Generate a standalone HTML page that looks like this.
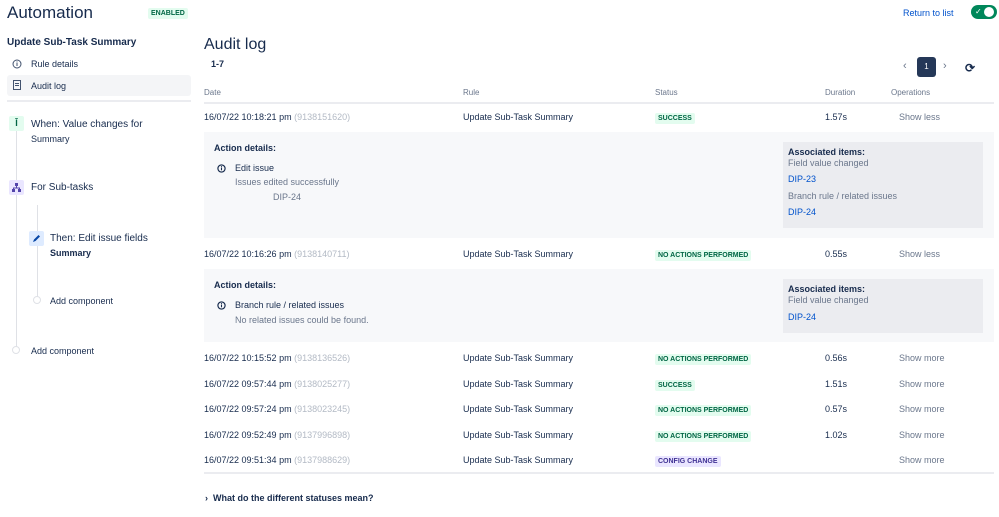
<!DOCTYPE html>
<html><head><meta charset="utf-8"><style>
*{margin:0;padding:0;box-sizing:border-box}
body{width:999px;height:517px;overflow:hidden;background:#fff;font-family:"Liberation Sans",sans-serif;color:#172b4d;position:relative;font-size:9px}
.a{position:absolute;white-space:nowrap;line-height:12px}
.g{color:#b3bac5}
.m{color:#6b778c}
.l{color:#0052cc}
.b{font-weight:bold}
.badge{position:absolute;font-size:7px;font-weight:bold;padding:1px 3px;line-height:9px;border-radius:2px;background:#e3fcef;color:#006644}
.cfg{background:#eae6ff;color:#403294}
.hl{position:absolute;height:2px;background:#ebecf0}
</style></head><body>
<div class="a" style="left:7px;top:3px;font-size:17px;line-height:20px">Automation</div>
<div class="badge" style="left:148px;top:8px">ENABLED</div>
<div class="a b" style="left:7px;top:37px;font-size:10px">Update Sub-Task Summary</div>
<svg class="a" style="left:12px;top:59px" width="10" height="10" viewBox="0 0 10 10"><circle cx="5" cy="5" r="4" fill="none" stroke="#42526e" stroke-width="1"/><rect x="4.5" y="4" width="1" height="3" fill="#42526e"/><rect x="4.5" y="2.5" width="1" height="1" fill="#42526e"/></svg>
<div class="a" style="left:31px;top:58px">Rule details</div>
<div style="position:absolute;left:7px;top:75px;width:184px;height:21px;background:#f4f5f7;border-radius:3px"></div>
<svg class="a" style="left:13px;top:80px" width="8" height="10" viewBox="0 0 8 10"><rect x="0.5" y="0.5" width="7" height="9" fill="none" stroke="#42526e"/><rect x="2" y="3" width="4" height="1" fill="#42526e"/><rect x="2" y="5" width="4" height="1" fill="#42526e"/></svg>
<div class="a" style="left:31px;top:80px">Audit log</div>
<div class="hl" style="left:7px;top:100px;width:184px"></div>
<div style="position:absolute;left:16px;top:130px;width:1px;height:220px;background:#dfe1e6"></div>
<div style="position:absolute;left:37px;top:205px;width:1px;height:95px;background:#dfe1e6"></div>
<div style="position:absolute;left:9px;top:116px;width:15px;height:15px;background:#e3fcef;border-radius:2px;color:#006644;font-size:9px;text-align:center;line-height:15px;font-weight:bold">Ī</div>
<div class="a" style="left:31px;top:119px;font-size:10px">When: Value changes for</div>
<div class="a" style="left:31px;top:133px">Summary</div>
<div style="position:absolute;left:9px;top:180px;width:15px;height:15px;background:#eae6ff;border-radius:2px"></div>
<svg class="a" style="left:12px;top:183px" width="9" height="9" viewBox="0 0 9 9"><rect x="3" y="0" width="3" height="3" fill="#5243aa"/><rect x="0" y="6" width="3" height="3" fill="#5243aa"/><rect x="6" y="6" width="3" height="3" fill="#5243aa"/><path d="M4.5 3V5M1.5 6V5H7.5V6" stroke="#5243aa" fill="none"/></svg>
<div class="a" style="left:31px;top:182px;font-size:10px">For Sub-tasks</div>
<div style="position:absolute;left:29px;top:231px;width:15px;height:15px;background:#deebff;border-radius:2px"></div>
<svg class="a" style="left:32px;top:234px" width="9" height="9" viewBox="0 0 9 9"><path d="M1 8L2 5.5L6.5 1L8 2.5L3.5 7Z" fill="#0747a6"/></svg>
<div class="a" style="left:50px;top:233px;font-size:10px">Then: Edit issue fields</div>
<div class="a b" style="left:50px;top:247px">Summary</div>
<div style="position:absolute;left:33px;top:296px;width:8px;height:8px;border:1px solid #dfe1e6;border-radius:50%;background:#fff"></div>
<div class="a" style="left:50px;top:295px">Add component</div>
<div style="position:absolute;left:12px;top:346px;width:8px;height:8px;border:1px solid #dfe1e6;border-radius:50%;background:#fff"></div>
<div class="a" style="left:31px;top:345px">Add component</div>

<div class="a" style="left:204px;top:35px;font-size:16px;line-height:20px">Audit log</div>
<div class="a b" style="left:211px;top:58px">1-7</div>
<div class="a l" style="left:903px;top:7px">Return to list</div>
<div style="position:absolute;left:971px;top:5px;width:26px;height:14px;background:#00875a;border-radius:7px"></div>
<div style="position:absolute;left:984px;top:7px;width:10px;height:10px;background:#fff;border-radius:50%"></div>
<div class="a" style="left:975px;top:6px;color:#fff;font-size:8px">✓</div>
<div class="a m" style="left:903px;top:60px;font-size:11px">‹</div>
<div style="position:absolute;left:917px;top:57px;width:19px;height:20px;background:#253858;border-radius:3px;color:#fff;font-size:8px;text-align:center;line-height:20px">1</div>
<div class="a m" style="left:943px;top:60px;font-size:11px">›</div>
<div class="a" style="left:965px;top:62px;font-size:12px;font-weight:bold">⟳</div>

<div class="a m" style="left:204px;top:87px;font-size:8px">Date</div>
<div class="a m" style="left:463px;top:87px;font-size:8px">Rule</div>
<div class="a m" style="left:655px;top:87px;font-size:8px">Status</div>
<div class="a m" style="left:825px;top:87px;font-size:8px">Duration</div>
<div class="a m" style="left:891px;top:87px;font-size:8px">Operations</div>
<div class="hl" style="left:204px;top:102px;width:790px"></div>

<div style="position:absolute;left:204px;top:132px;width:790px;height:106px;background:#f7f8fa"></div>
<div style="position:absolute;left:783px;top:142px;width:200px;height:86px;background:#ebecf0"></div>
<div style="position:absolute;left:204px;top:269px;width:790px;height:73px;background:#f7f8fa"></div>
<div style="position:absolute;left:783px;top:279px;width:200px;height:54px;background:#ebecf0"></div>

<div class="a" style="left:204px;top:111px">16/07/22 10:18:21 pm <span class="g">(9138151620)</span></div>
<div class="a" style="left:463px;top:111px">Update Sub-Task Summary</div>
<div class="badge" style="left:655px;top:113px">SUCCESS</div>
<div class="a" style="left:825px;top:111px">1.57s</div>
<div class="a m" style="left:899px;top:111px">Show less</div>
<div class="a b" style="left:214px;top:142px">Action details:</div>
<svg class="a" style="left:217px;top:164px" width="9" height="9" viewBox="0 0 10 10"><circle cx="5" cy="5" r="4" fill="none" stroke="#172b4d" stroke-width="1.3"/><rect x="4.4" y="4" width="1.2" height="3" fill="#172b4d"/><rect x="4.4" y="2.4" width="1.2" height="1.1" fill="#172b4d"/></svg>
<div class="a" style="left:235px;top:162px">Edit issue</div>
<div class="a m" style="left:235px;top:176px">Issues edited successfully</div>
<div class="a m" style="left:273px;top:191px">DIP-24</div>
<div class="a b" style="left:788px;top:146px">Associated items:</div>
<div class="a m" style="left:788px;top:157px">Field value changed</div>
<div class="a l" style="left:788px;top:173px">DIP-23</div>
<div class="a m" style="left:788px;top:190px">Branch rule / related issues</div>
<div class="a l" style="left:788px;top:206px">DIP-24</div>

<div class="a" style="left:204px;top:248px">16/07/22 10:16:26 pm <span class="g">(9138140711)</span></div>
<div class="a" style="left:463px;top:248px">Update Sub-Task Summary</div>
<div class="badge" style="left:655px;top:250px">NO ACTIONS PERFORMED</div>
<div class="a" style="left:825px;top:248px">0.55s</div>
<div class="a m" style="left:899px;top:248px">Show less</div>
<div class="a b" style="left:214px;top:279px">Action details:</div>
<svg class="a" style="left:217px;top:301px" width="9" height="9" viewBox="0 0 10 10"><circle cx="5" cy="5" r="4" fill="none" stroke="#172b4d" stroke-width="1.3"/><rect x="4.4" y="4" width="1.2" height="3" fill="#172b4d"/><rect x="4.4" y="2.4" width="1.2" height="1.1" fill="#172b4d"/></svg>
<div class="a" style="left:235px;top:299px">Branch rule / related issues</div>
<div class="a m" style="left:235px;top:314px">No related issues could be found.</div>
<div class="a b" style="left:788px;top:283px">Associated items:</div>
<div class="a m" style="left:788px;top:294px">Field value changed</div>
<div class="a l" style="left:788px;top:311px">DIP-24</div>

<div class="a" style="left:204px;top:352px">16/07/22 10:15:52 pm <span class="g">(9138136526)</span></div>
<div class="a" style="left:463px;top:352px">Update Sub-Task Summary</div>
<div class="badge" style="left:655px;top:354px">NO ACTIONS PERFORMED</div>
<div class="a" style="left:825px;top:352px">0.56s</div>
<div class="a m" style="left:899px;top:352px">Show more</div>

<div class="a" style="left:204px;top:378px">16/07/22 09:57:44 pm <span class="g">(9138025277)</span></div>
<div class="a" style="left:463px;top:378px">Update Sub-Task Summary</div>
<div class="badge" style="left:655px;top:380px">SUCCESS</div>
<div class="a" style="left:825px;top:378px">1.51s</div>
<div class="a m" style="left:899px;top:378px">Show more</div>

<div class="a" style="left:204px;top:403px">16/07/22 09:57:24 pm <span class="g">(9138023245)</span></div>
<div class="a" style="left:463px;top:403px">Update Sub-Task Summary</div>
<div class="badge" style="left:655px;top:405px">NO ACTIONS PERFORMED</div>
<div class="a" style="left:825px;top:403px">0.57s</div>
<div class="a m" style="left:899px;top:403px">Show more</div>

<div class="a" style="left:204px;top:429px">16/07/22 09:52:49 pm <span class="g">(9137996898)</span></div>
<div class="a" style="left:463px;top:429px">Update Sub-Task Summary</div>
<div class="badge" style="left:655px;top:431px">NO ACTIONS PERFORMED</div>
<div class="a" style="left:825px;top:429px">1.02s</div>
<div class="a m" style="left:899px;top:429px">Show more</div>

<div class="a" style="left:204px;top:454px">16/07/22 09:51:34 pm <span class="g">(9137988629)</span></div>
<div class="a" style="left:463px;top:454px">Update Sub-Task Summary</div>
<div class="badge cfg" style="left:655px;top:456px">CONFIG CHANGE</div>
<div class="a m" style="left:899px;top:454px">Show more</div>
<div class="hl" style="left:204px;top:472px;width:790px"></div>

<div class="a b" style="left:205px;top:492px">›&nbsp;&nbsp;What do the different statuses mean?</div>
</body></html>
